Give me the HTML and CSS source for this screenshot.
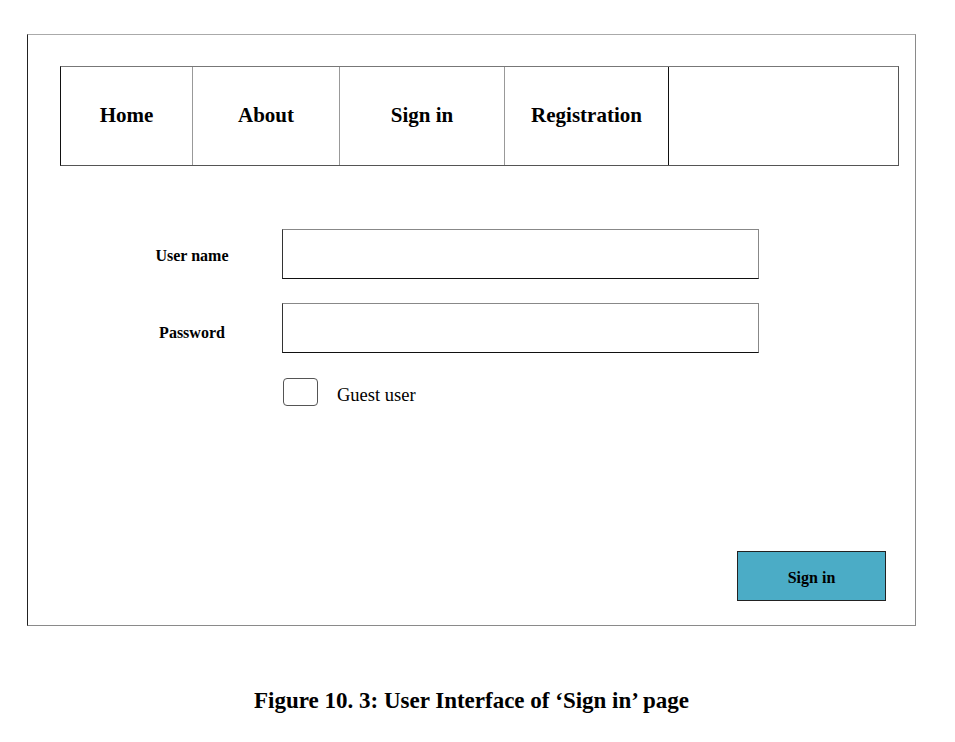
FILE: index.html
```html
<!DOCTYPE html>
<html>
<head>
<meta charset="utf-8">
<link rel="stylesheet" href="styles.css">
</head>
<body>
<div class="frame">
  <nav class="nav">
    <div class="cell c1">Home</div>
    <div class="cell c2">About</div>
    <div class="cell c3">Sign in</div>
    <div class="cell c4">Registration</div>
    <div class="cell c5"></div>
  </nav>
  <div class="form">
    <div class="label l1">User name</div>
    <div class="input"></div>
    <div class="label l2">Password</div>
    <div class="input"></div>
    <div></div>
    <div class="check-row"><span class="check"></span><span class="guest">Guest user</span></div>
  </div>
  <div class="actions"><div class="btn">Sign in</div></div>
</div>
<div class="caption">Figure 10. 3: User Interface of ‘Sign in’ page</div>
</body>
</html>
```
FILE: styles.css
```css
html, body { margin: 0; padding: 0; background: #fff; }
body { font-family: "Liberation Serif", "Times New Roman", serif; color: #000; }
.frame {
  box-sizing: border-box;
  margin: 34px 0 0 27px;
  width: 889px;
  height: 592px;
  border: 1px solid #8a8a8a;
  border-left-color: #222;
  border-top-color: #aaa;
  padding: 31px 16px 0 32px;
  display: flex;
  flex-direction: column;
}
.nav {
  display: flex;
  height: 100px;
  box-sizing: border-box;
  border: 1px solid #555;
  border-top-color: #777;
  border-left-color: #111;
  width: 839px;
}
.cell {
  display: flex;
  align-items: center;
  justify-content: center;
  font-weight: bold;
  font-size: 21px;
  box-sizing: border-box;
  padding-bottom: 2px;
}
.c1 { width: 132px; border-right: 1px solid #999; }
.c2 { width: 147px; border-right: 1px solid #999; }
.c3 { width: 165px; border-right: 1px solid #999; }
.c4 { width: 164px; border-right: 1px solid #111; }
.c5 { flex: 1; }
.form {
  display: grid;
  grid-template-columns: 140px 477px;
  column-gap: 20px;
  row-gap: 24px;
  margin: 63px 0 0 62px;
  align-items: center;
}
.label {
  font-weight: bold;
  font-size: 16px;
  text-align: center;
}
.l1 { padding-top: 4px; }
.l2 { padding-top: 9px; }
.input {
  box-sizing: border-box;
  height: 50px;
  border: 1px solid #888;
  border-bottom-color: #111;
  border-left-color: #333;
}
.check-row { display: flex; align-items: flex-start; margin-left: 1px; margin-top: 1px; align-self: start; }
.check {
  box-sizing: border-box;
  width: 35px;
  height: 28px;
  border: 1px solid #555;
  border-radius: 4px;
}
.guest { font-size: 18.5px; line-height: 21px; margin-left: 19px; padding-top: 7px; }
.actions {
  margin-top: auto;
  display: flex;
  justify-content: flex-end;
  padding: 0 13px 24px 0;
}
.btn {
  box-sizing: border-box;
  width: 149px;
  height: 50px;
  background: #4bacc6;
  border: 1px solid #222;
  display: flex;
  align-items: center;
  justify-content: center;
  font-weight: bold;
  font-size: 16px;
  padding-top: 3px;
}
.caption {
  text-align: center;
  font-weight: bold;
  font-size: 23px;
  margin: 62px 0 0 0;
  padding-right: 12px;
}
```
